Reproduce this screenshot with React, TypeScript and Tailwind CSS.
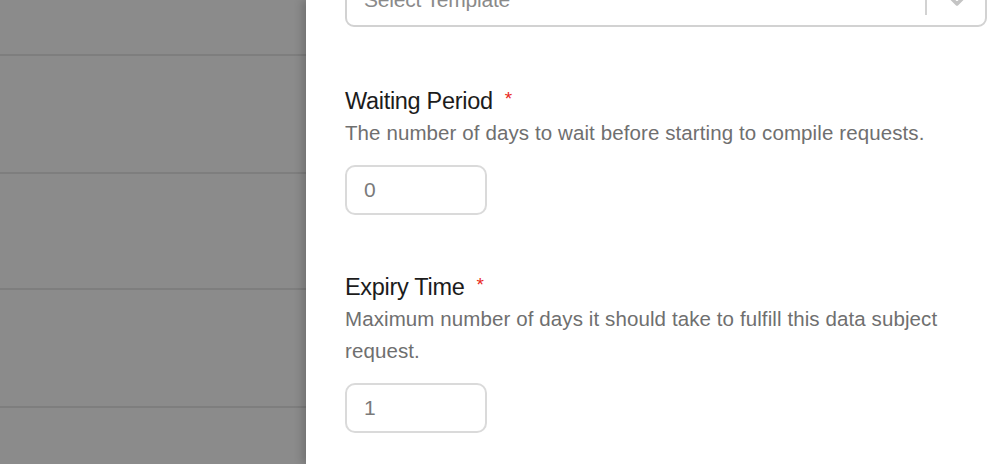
function Field({
  label,
  help,
  value,
  gap,
}: {
  label: string;
  help: string;
  value: string;
  gap: string;
}) {
  return (
    <div className={gap}>
      <div className="flex items-start h-8 leading-8">
        <span className="text-[23.5px] tracking-[-0.3px] text-[#1c1c1c]">{label}</span>
        <span className="ml-[12px] text-[19px] leading-7 text-[#e8291c]">*</span>
      </div>
      <p className="text-[20.5px] leading-8 tracking-[0.1px] text-[#6f6f6f]">{help}</p>
      <div className="mt-[16px] w-[142px] h-[50px] rounded-[10px] border-2 border-[#dadada] flex items-center px-[17px]">
        <span className="text-[21px] text-[#7a7a7a]">{value}</span>
      </div>
    </div>
  );
}

export default function App() {
  return (
    <div
      className="flex w-[1000px] h-[464px] overflow-hidden"
      style={{ fontFamily: '"Liberation Sans", Arial, sans-serif' }}
    >
      {/* backdrop over the list */}
      <div className="w-[306px] shrink-0 bg-[#8b8b8b] flex flex-col">
        <div className="h-[54px]" />
        <div className="h-[2px] bg-[#7e7e7e]" />
        <div className="h-[116px]" />
        <div className="h-[2px] bg-[#7e7e7e]" />
        <div className="h-[114px]" />
        <div className="h-[2px] bg-[#7e7e7e]" />
        <div className="h-[116px]" />
        <div className="h-[2px] bg-[#7e7e7e]" />
      </div>

      {/* drawer */}
      <div className="relative flex-1 bg-white pl-[39px] pr-[13px] shadow-[-4px_0_8px_rgba(0,0,0,0.18)]">
        <div className="-mt-[24px] h-[51px] rounded-[9px] border-2 border-[#d2d2d2] flex items-center pl-[17px]">
          <span className="flex-1 -mt-[4px] text-[21px] text-[#8a8a8a] tracking-[-0.2px]">Select Template</span>
          <div className="self-start mt-[2px] w-[2px] h-[35px] bg-[#d2d2d2]" />
          <div className="w-[58px] flex justify-center">
            <svg width="16" height="10" viewBox="0 0 16 10" className="-mt-[2px] ml-[2px]">
              <path d="M2 2 L8 8 L14 2" fill="none" stroke="#c4c4c4" strokeWidth="3.5" strokeLinecap="round" strokeLinejoin="round" />
            </svg>
          </div>
        </div>

        <Field
          gap="mt-[58px]"
          label="Waiting Period"
          help="The number of days to wait before starting to compile requests."
          value="0"
        />
        <Field
          gap="mt-[56px]"
          label="Expiry Time"
          help="Maximum number of days it should take to fulfill this data subject request."
          value="1"
        />
      </div>
    </div>
  );
}
